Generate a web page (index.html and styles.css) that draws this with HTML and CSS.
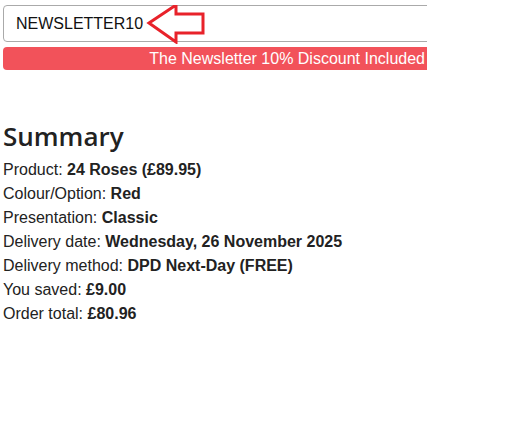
FILE: index.html
```html
<!DOCTYPE html>
<html>
<head>
<meta charset="utf-8">
<link rel="stylesheet" href="styles.css">
</head>
<body>
<div class="wrap">
  <div class="coupon">
    <div class="field">NEWSLETTER10</div>
    <svg class="arrow" width="60" height="44" viewBox="0 0 60 44">
      <path d="M3 23 L30 5 L30 14 L57 14 L57 33 L30 33 L30 42 Z" fill="none" stroke="#e8222a" stroke-width="3" stroke-linejoin="miter"/>
    </svg>
  </div>
  <div class="notice">The Newsletter 10% Discount Included</div>
</div>
<div class="summary">
  <h2 class="title">Summary</h2>
  <div class="row">Product: <b>24 Roses (£89.95)</b></div>
  <div class="row">Colour/Option: <b>Red</b></div>
  <div class="row">Presentation: <b>Classic</b></div>
  <div class="row">Delivery date: <b>Wednesday, 26 November 2025</b></div>
  <div class="row">Delivery method: <b>DPD Next-Day (FREE)</b></div>
  <div class="row">You saved: <b>£9.00</b></div>
  <div class="row">Order total: <b>£80.96</b></div>
</div>
</body>
</html>
```
FILE: styles.css
```css
html, body { margin: 0; padding: 0; background: #fff; }
body { padding: 5px 3px 0 3px; font-family: "Liberation Sans", Arial, sans-serif; color: #222; }
.wrap { width: 424px; overflow: hidden; }
.coupon { position: relative; }
.field {
  width: 440px;
  height: 37px;
  box-sizing: border-box;
  border: 1px solid #aaa;
  border-radius: 4px;
  padding-left: 12px;
  display: flex;
  align-items: center;
  font-size: 16px;
  color: #111;
}
.arrow { position: absolute; left: 143px; top: -5px; }
.notice {
  margin-top: 5px;
  height: 23px;
  background: #f2525a;
  color: #fff;
  border-radius: 4px 0 0 4px;
  font-size: 16px;
  line-height: 23px;
  text-align: right;
  padding-right: 2px;
  white-space: nowrap;
}
.summary { margin-top: 50px; }
.title {
  margin: 0 0 6px 0;
  font-family: "Open Sans", sans-serif;
  font-weight: 600;
  font-size: 26px;
  line-height: 32px;
  color: #222;
}
.row { font-size: 16px; line-height: 24px; }
.row b { font-weight: bold; }
```
